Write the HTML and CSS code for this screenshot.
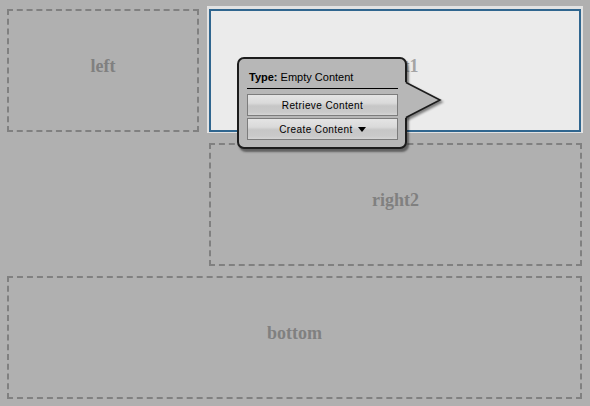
FILE: index.html
```html
<!DOCTYPE html>
<html lang="en">
<head>
    <meta charset="UTF-8">
    <title>Layout</title>
    <link rel="stylesheet" href="styles.css">
</head>
<body>
    <div class="layout">
        <div class="region region-left"><span class="label">left</span></div>

        <!-- selected region with its popup -->
        <div class="region region-right1 selected">
            <span class="label">right1</span>
            <div class="popup">
                <div class="popup-title"><b>Type:</b> Empty Content</div>
                <button class="popup-btn">Retrieve Content</button>
                <button class="popup-btn">Create Content <span class="caret"></span></button>
                <svg class="popup-arrow" width="40" height="40" viewBox="0 0 40 40">
                    <path d="M0 0 L35 18 L0 36 Z" fill="#b7b7b7"/>
                    <path d="M1 0.5 L35 18 L1 35.5" fill="none" stroke="#1c1c1c" stroke-width="1.6"/>
                </svg>
            </div>
        </div>

        <div class="region region-right2"><span class="label">right2</span></div>
        <div class="region region-bottom"><span class="label">bottom</span></div>
    </div>
</body>
</html>
```

FILE: styles.css
```css
* {
    margin: 0;
    padding: 0;
    box-sizing: border-box;
}

body {
    background-color: #b0b0b0;
    font-family: 'Liberation Sans', Arial, sans-serif;
}

.layout {
    display: grid;
    grid-template-columns: 192px 373px;
    grid-template-rows: 123px 124px 123px;
    column-gap: 10px;
    row-gap: 10px;
    padding: 9px 8px 7px 7px;
}

.region {
    border: 2px dashed #808080;
    display: flex;
    justify-content: center;
    align-items: center;
    padding-bottom: 8px;
}

.region-left {
    grid-column: 1;
    grid-row: 1;
}

.region-right1 {
    grid-column: 2;
    grid-row: 1;
}

.region-right2 {
    grid-column: 2;
    grid-row: 2;
    margin-top: 1px;
}

.region-bottom {
    grid-column: 1 / 3;
    grid-row: 3;
}

.label {
    font-family: 'Liberation Serif', 'Times New Roman', serif;
    font-weight: bold;
    font-size: 18px;
    color: #808080;
}

/* selected region */
.selected {
    position: relative;
    border: 2px solid #30668f;
    background-color: #ebebeb;
    box-shadow: 0 -1px 0 2px #e2e2e2;
    margin-right: 1px;
}

.selected .label {
    color: #a4a4a4;
}

/* popup */
.popup {
    position: absolute;
    left: 26px;
    top: 46px;
    z-index: 10;
    width: 170px;
    background-color: #b7b7b7;
    border: 2px solid #1c1c1c;
    border-radius: 7px;
    box-shadow: 2px 3px 2px rgba(0, 0, 0, 0.45);
    padding: 11px 7px 7px 8px;
}

.popup-title {
    font-size: 11px;
    line-height: 14px;
    color: #000;
    padding: 0 0 4px 2px;
    border-bottom: 1px solid #000;
    margin-bottom: 5px;
}

.popup-btn {
    display: block;
    width: 100%;
    height: 22px;
    margin-bottom: 2px;
    border: 1px solid #7c7c7c;
    background: linear-gradient(#e4e4e4 0%, #dadada 40%, #c6c6c6 55%, #c9c9c9 85%, #d4d4d4 100%);
    font-family: 'Liberation Sans', Arial, sans-serif;
    font-size: 10px;
    letter-spacing: 0.4px;
    color: #000;
    cursor: pointer;
}

.popup-btn:last-of-type {
    margin-bottom: 0;
}

.caret {
    display: inline-block;
    width: 0;
    height: 0;
    border-left: 4px solid transparent;
    border-right: 4px solid transparent;
    border-top: 5px solid #000;
    margin-left: 2px;
    vertical-align: 1px;
}

.popup-arrow {
    position: absolute;
    left: 166px;
    top: 23px;
    filter: drop-shadow(2px 2px 1px rgba(0, 0, 0, 0.45));
}
```
